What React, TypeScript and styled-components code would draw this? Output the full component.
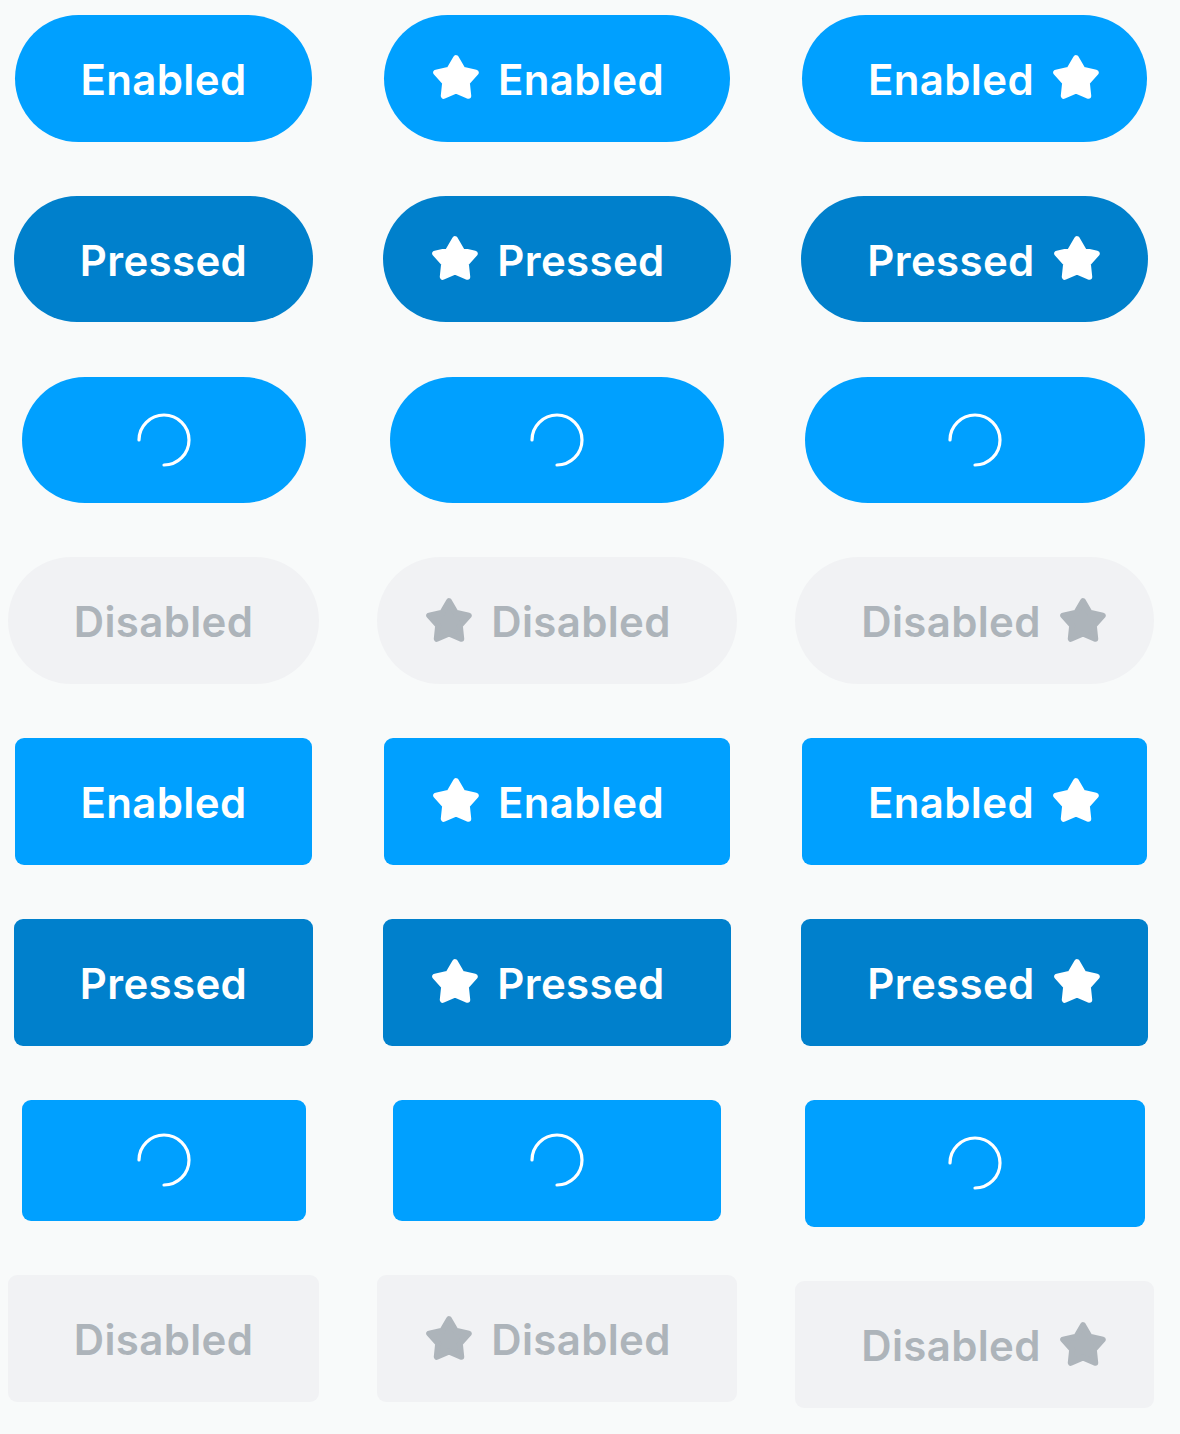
import React from "react";
import styled, { createGlobalStyle, css } from "styled-components";

const GlobalStyle = createGlobalStyle`
  html, body {
    margin: 0;
    padding: 0;
    background: #f8fafa;
  }
  body {
    font-family: Inter, "Noto Sans", "Liberation Sans", sans-serif;
    -webkit-font-smoothing: antialiased;
  }
`;

type Variant = "enabled" | "pressed" | "loading" | "disabled";
type Shape = "pill" | "square";
type IconSide = "none" | "left" | "right";

const Page = styled.div`
  display: flex;
  flex-direction: row;
  align-items: flex-start;
  gap: 59.5px;
  padding: 15px 0 0 8.5px;
  min-height: 1434px;
  box-sizing: border-box;
  background: #f8fafa;
`;

const Column = styled.div<{ $width: number }>`
  display: flex;
  flex-direction: column;
  align-items: center;
  gap: 54.1px;
  width: ${(p) => p.$width}px;
  flex: none;
`;

const palette: Record<Variant, { bg: string; fg: string }> = {
  enabled: { bg: "#00a0ff", fg: "#ffffff" },
  loading: { bg: "#00a0ff", fg: "#ffffff" },
  pressed: { bg: "#0080cc", fg: "#ffffff" },
  disabled: { bg: "#f1f2f4", fg: "#adb4ba" },
};

const Button = styled.button<{
  $variant: Variant;
  $shape: Shape;
  $icon: IconSide;
  $width?: number;
  $height: number;
}>`
  display: inline-flex;
  align-items: center;
  justify-content: center;
  gap: 18px;
  box-sizing: border-box;
  height: ${(p) => p.$height}px;
  ${(p) =>
    p.$width
      ? css`
          width: ${p.$width}px;
          padding: 0;
        `
      : css`
          padding: 0 ${p.$icon === "right" ? 47 : 66}px 0
            ${p.$icon === "left" ? 48 : 66}px;
        `}
  border: none;
  margin: 0;
  border-radius: ${(p) => (p.$shape === "pill" ? "64px" : "9px")};
  background: ${(p) => palette[p.$variant].bg};
  color: ${(p) => palette[p.$variant].fg};
  font-family: Inter, "Noto Sans", "Liberation Sans", sans-serif;
  font-weight: 600;
  font-size: 42px;
  line-height: 1;
  letter-spacing: 0.35px;
  cursor: ${(p) => (p.$variant === "disabled" ? "default" : "pointer")};
  flex: none;
`;

const Label = styled.span`
  display: block;
  padding-top: 3px;
  white-space: nowrap;
`;

const IconSvg = styled.svg`
  display: block;
  flex: none;
  width: 48px;
  height: 48px;
`;

const starPoints = (() => {
  const cx = 24;
  const cy = 25;
  const R = 20.8;
  const r = 11.4;
  const pts: string[] = [];
  for (let i = 0; i < 10; i++) {
    const ang = (-90 + i * 36) * (Math.PI / 180);
    const rad = i % 2 === 0 ? R : r;
    pts.push(`${(cx + rad * Math.cos(ang)).toFixed(2)},${(cy + rad * Math.sin(ang)).toFixed(2)}`);
  }
  return pts.join(" ");
})();

const Star = () => (
  <IconSvg viewBox="0 0 48 48" aria-hidden="true">
    <polygon
      points={starPoints}
      fill="currentColor"
      stroke="currentColor"
      strokeWidth={6}
      strokeLinejoin="round"
    />
  </IconSvg>
);

const SpinnerSvg = styled.svg`
  display: block;
  width: 56px;
  height: 56px;
`;

const Spinner = () => (
  <SpinnerSvg viewBox="0 0 56 56" aria-hidden="true">
    <path
      d="M3 28 A25 25 0 1 1 28 53"
      fill="none"
      stroke="currentColor"
      strokeWidth={3.2}
      strokeLinecap="round"
    />
  </SpinnerSvg>
);

type Spec = {
  variant: Variant;
  shape: Shape;
  icon: IconSide;
  label?: string;
  width?: number;
  height?: number;
};

const columns: { width: number; items: Spec[] }[] = [
  {
    width: 310,
    items: [
      { variant: "enabled", shape: "pill", icon: "none", label: "Enabled" },
      { variant: "pressed", shape: "pill", icon: "none", label: "Pressed" },
      { variant: "loading", shape: "pill", icon: "none", width: 284 },
      { variant: "disabled", shape: "pill", icon: "none", label: "Disabled" },
      { variant: "enabled", shape: "square", icon: "none", label: "Enabled" },
      { variant: "pressed", shape: "square", icon: "none", label: "Pressed" },
      { variant: "loading", shape: "square", icon: "none", width: 284, height: 121.4 },
      { variant: "disabled", shape: "square", icon: "none", label: "Disabled" },
    ],
  },
  {
    width: 358,
    items: [
      { variant: "enabled", shape: "pill", icon: "left", label: "Enabled" },
      { variant: "pressed", shape: "pill", icon: "left", label: "Pressed" },
      { variant: "loading", shape: "pill", icon: "left", width: 334 },
      { variant: "disabled", shape: "pill", icon: "left", label: "Disabled" },
      { variant: "enabled", shape: "square", icon: "left", label: "Enabled" },
      { variant: "pressed", shape: "square", icon: "left", label: "Pressed" },
      { variant: "loading", shape: "square", icon: "left", width: 328, height: 121.4 },
      { variant: "disabled", shape: "square", icon: "left", label: "Disabled" },
    ],
  },
  {
    width: 358,
    items: [
      { variant: "enabled", shape: "pill", icon: "right", label: "Enabled" },
      { variant: "pressed", shape: "pill", icon: "right", label: "Pressed" },
      { variant: "loading", shape: "pill", icon: "right", width: 340 },
      { variant: "disabled", shape: "pill", icon: "right", label: "Disabled" },
      { variant: "enabled", shape: "square", icon: "right", label: "Enabled" },
      { variant: "pressed", shape: "square", icon: "right", label: "Pressed" },
      { variant: "loading", shape: "square", icon: "right", width: 340, height: 127.4 },
      { variant: "disabled", shape: "square", icon: "right", label: "Disabled" },
    ],
  },
];

const DemoButton = ({ spec }: { spec: Spec }) => {
  const { variant, shape, icon, label, width, height = 126.7 } = spec;
  return (
    <Button
      type="button"
      $variant={variant}
      $shape={shape}
      $icon={icon}
      $width={width}
      $height={height}
      disabled={variant === "disabled"}
    >
      {variant === "loading" ? (
        <Spinner />
      ) : (
        <>
          {icon === "left" && <Star />}
          <Label>{label}</Label>
          {icon === "right" && <Star />}
        </>
      )}
    </Button>
  );
};

export default function App() {
  return (
    <>
      <GlobalStyle />
      <Page>
        {columns.map((col, ci) => (
          <Column key={ci} $width={col.width}>
            {col.items.map((spec, i) => (
              <DemoButton key={i} spec={spec} />
            ))}
          </Column>
        ))}
      </Page>
    </>
  );
}
